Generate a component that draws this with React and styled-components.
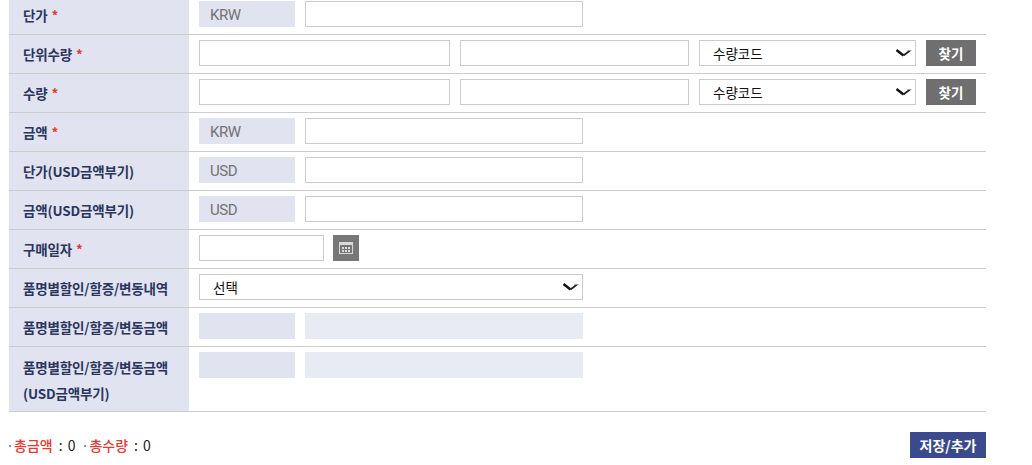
import React from "react";
import styled, { createGlobalStyle } from "styled-components";

const Global = createGlobalStyle`
  html, body { margin: 0; padding: 0; background: #fff; overflow: hidden; }
  body { font-family: "Noto Sans CJK KR", "Noto Sans", sans-serif; }
`;

const Page = styled.div`
  width: 977px;
  margin: -4px 0 0 9px;
`;

const Row = styled.div`
  display: grid;
  grid-template-columns: 180px 1fr;
  border-bottom: 1px solid #cccccc;
`;

const Label = styled.div`
  background: #e1e4f0;
  padding: ${(p) => (p.$tall ? "7px 0 5px 14px" : "10px 0 0 14px")};
  font-size: 13.5px;
  font-weight: 700;
  line-height: ${(p) => (p.$tall ? "26px" : "18px")};
  color: #2a3560;
  letter-spacing: -0.15px;
  white-space: nowrap;
`;

const Star = styled.span`
  color: #e8392f;
  margin-left: 1px;
`;

const Cell = styled.div`
  display: flex;
  align-items: flex-start;
  gap: 10px;
  padding: 5px 10px 7px;
`;

const Currency = styled.div`
  box-sizing: border-box;
  width: 96px;
  height: 26px;
  flex: none;
  background: #e1e4f0;
  padding-left: 11px;
  font: 15px/28px Roboto, sans-serif;
  letter-spacing: -0.5px;
  color: #727272;
`;

const Field = styled.input`
  box-sizing: border-box;
  width: ${(p) => p.$w}px;
  height: 26px;
  flex: none;
  margin: 0;
  background: ${(p) => (p.$off ? "#e8ebf3" : "#fff")};
  border: ${(p) => (p.$off ? "0" : "1px solid #cbcbcb")};
  outline: none;
`;

const PickerWrap = styled.div`
  position: relative;
  flex: none;
  width: ${(p) => p.$w}px;
  height: 26px;
`;

const Picker = styled.select`
  box-sizing: border-box;
  display: block;
  width: 100%;
  height: 26px;
  margin: 0;
  padding-left: 13px;
  appearance: none;
  background: #fff;
  border: 1px solid #cbcbcb;
  border-radius: 0;
  font-family: "Noto Sans CJK KR", sans-serif;
  font-size: 13.5px;
  color: #111;
`;

const Chevron = styled.svg`
  position: absolute;
  right: 4px;
  top: 9px;
  pointer-events: none;
`;

const Find = styled.button`
  width: 50px;
  height: 26px;
  flex: none;
  border: 0;
  padding: 0;
  background: #6f6f6f;
  color: #fff;
  font-family: "Noto Sans CJK KR", sans-serif;
  font-size: 13.5px;
  font-weight: 700;
`;

const DateGroup = styled.div`
  display: flex;
  gap: 9px;
`;

const CalendarButton = styled.button`
  display: flex;
  align-items: center;
  justify-content: center;
  width: 26px;
  height: 26px;
  border: 0;
  padding: 0;
  background: #777777;
`;

const Footer = styled.div`
  display: flex;
  align-items: center;
  justify-content: space-between;
  margin-top: 20px;
  height: 26px;
`;

const Totals = styled.div`
  display: flex;
  gap: 9px;
  font-size: 14px;
  line-height: 26px;
  color: #222;
  word-spacing: 2px;
`;

const Total = styled.span`
  position: relative;
  padding-left: 5px;
  &::before {
    content: "";
    position: absolute;
    left: 0;
    top: 13px;
    width: 2px;
    height: 2px;
    background: #7f8fc9;
  }
`;

const TotalName = styled.em`
  font-style: normal;
  font-weight: 500;
  color: #e8392f;
  margin-right: 6px;
`;

const Save = styled.button`
  width: 76px;
  height: 26px;
  border: 0;
  padding: 0;
  background: #3a4a8c;
  color: #fff;
  font-family: "Noto Sans CJK KR", sans-serif;
  font-size: 14px;
  font-weight: 700;
`;

const CalendarIcon = () => (
  <svg width="14" height="12" viewBox="0 0 14 12" aria-hidden="true">
    <rect x="0.5" y="0.5" width="13" height="11" fill="none" stroke="#d9d9d9" />
    <rect x="1" y="1" width="12" height="2" fill="#d9d9d9" />
    <g fill="#d9d9d9">
      <rect x="3" y="5" width="2" height="2" />
      <rect x="6" y="5" width="2" height="2" />
      <rect x="9" y="5" width="2" height="2" />
      <rect x="3" y="8" width="2" height="2" />
      <rect x="6" y="8" width="2" height="2" />
      <rect x="9" y="8" width="2" height="2" />
    </g>
  </svg>
);

const Select = ({ w, children }) => (
  <PickerWrap $w={w}>
    <Picker>
      <option>{children}</option>
    </Picker>
    <Chevron width="16" height="9" viewBox="0 0 16 9" aria-hidden="true">
      <path d="M0.5 1 L7.5 6.5" fill="none" stroke="#111" strokeWidth="2.4" />
      <path d="M7.5 6.5 L14 1.5" fill="none" stroke="#222" strokeWidth="1.7" />
      <path d="M11.5 1.5 L15.5 1.5" fill="none" stroke="#999" strokeWidth="1" />
    </Chevron>
  </PickerWrap>
);

const Req = () => <Star> *</Star>;

const Money = ({ label, code, req }) => (
  <Row>
    <Label>
      {label}
      {req && <Req />}
    </Label>
    <Cell>
      <Currency>{code}</Currency>
      <Field $w={278} />
    </Cell>
  </Row>
);

const Qty = ({ label }) => (
  <Row>
    <Label>
      {label}
      <Req />
    </Label>
    <Cell>
      <Field $w={251} />
      <Field $w={229} />
      <Select w={217}>수량코드</Select>
      <Find>찾기</Find>
    </Cell>
  </Row>
);

export default function App() {
  return (
    <Page>
      <Global />
      <Money label="단가" code="KRW" req />
      <Qty label="단위수량" />
      <Qty label="수량" />
      <Money label="금액" code="KRW" req />
      <Money label="단가(USD금액부기)" code="USD" />
      <Money label="금액(USD금액부기)" code="USD" />
      <Row>
        <Label>
          구매일자
          <Req />
        </Label>
        <Cell>
          <DateGroup>
            <Field $w={125} />
            <CalendarButton>
              <CalendarIcon />
            </CalendarButton>
          </DateGroup>
        </Cell>
      </Row>
      <Row>
        <Label>품명별할인/할증/변동내역</Label>
        <Cell>
          <Select w={384}>선택</Select>
        </Cell>
      </Row>
      <Row>
        <Label>품명별할인/할증/변동금액</Label>
        <Cell>
          <Currency />
          <Field $w={278} $off readOnly />
        </Cell>
      </Row>
      <Row>
        <Label $tall>
          품명별할인/할증/변동금액
          <br />
          (USD금액부기)
        </Label>
        <Cell>
          <Currency />
          <Field $w={278} $off readOnly />
        </Cell>
      </Row>
      <Footer>
        <Totals>
          <Total>
            <TotalName>총금액</TotalName>: 0
          </Total>
          <Total>
            <TotalName>총수량</TotalName>: 0
          </Total>
        </Totals>
        <Save>저장/추가</Save>
      </Footer>
    </Page>
  );
}
